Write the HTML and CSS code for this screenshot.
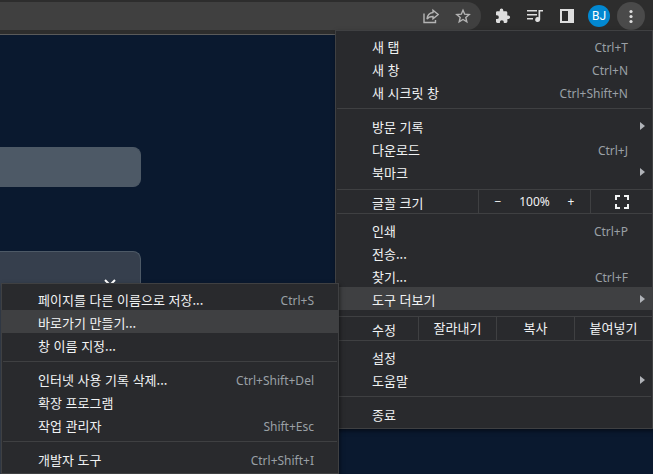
FILE: index.html
```html
<!DOCTYPE html>
<html lang="ko">
<head>
<meta charset="utf-8">
<title>도구 더보기</title>
<link rel="stylesheet" href="styles.css">
</head>
<body>
<header class="toolbar">
  <div class="omnibox">
    <input class="address" type="text" aria-label="주소창">
    <button class="tool" aria-label="공유">
      <svg class="icon dim" viewBox="0 0 16 16"><path d="M1 5.500v9h11.500v-2.500"/><path d="M10 2.200l5.200 4.300-5.200 4.300V8.500c-3 0-4.800.7-6 2.500.3-3.600 2.200-6 6-6.500z"/></svg>
    </button>
    <button class="tool" aria-label="북마크 추가">
      <svg class="icon dim" viewBox="0 0 16 16"><path d="M8 2.200l1.700 4 4.500.4-3.400 2.900 1 4.300L8 11.500l-3.800 2.300 1-4.300-3.400-2.900 4.500-.4z"/></svg>
    </button>
  </div>
  <div class="actions">
    <button class="tool" aria-label="확장 프로그램">
      <svg class="icon solid" viewBox="0 0 16 16"><path d="M13.300 7.500h-1V4.700c0-.8-.6-1.400-1.400-1.400H8.300v-.9a1.800 1.800 0 0 0-3.600 0v.9H2.200C1.500 3.300 1 3.900 1 4.700v2.500h.9a1.900 1.900 0 0 1 0 3.900H1v2.500c0 .8.600 1.400 1.400 1.400h2.500v-.9a1.900 1.900 0 0 1 3.900 0v.9h2.200c.8 0 1.400-.6 1.400-1.400v-2.500h.9a1.800 1.800 0 0 0 0-3.600z"/></svg>
    </button>
    <button class="tool" aria-label="미디어 컨트롤">
      <svg class="icon solid" viewBox="0 0 16 16"><path d="M0 2h10v1.500H0zM0 6h10v1.500H0zM0 10h6v1.500H0zM11.500 2H16v1.600h-2.800v8a2.500 2.500 0 1 1-1.700-2.400z"/></svg>
    </button>
    <button class="tool" aria-label="측면 패널">
      <svg class="icon solid" viewBox="0 0 16 16"><path fill-rule="evenodd" d="M1 1h14v14H1zM3 3v10h6V3z"/></svg>
    </button>
    <button class="tool" aria-label="프로필"><span class="avatar">BJ</span></button>
    <button class="tool" aria-label="메뉴">
      <span class="more"><svg class="icon solid" viewBox="0 0 16 16"><circle cx="8" cy="3.500" r="1.600"/><circle cx="8" cy="8.500" r="1.600"/><circle cx="8" cy="13.500" r="1.600"/></svg></span>
    </button>
  </div>
</header>

<main class="page">
  <input class="field" type="text" aria-label="입력">
  <section class="card">
    <button class="close" aria-label="닫기"><svg viewBox="0 0 12 12"><path d="M1 1l10 10M11 1L1 11"/></svg></button>
  </section>
</main>

<ul class="menu main-menu">
  <li><button class="item">새 탭<kbd>Ctrl+T</kbd></button></li>
  <li><button class="item">새 창<kbd>Ctrl+N</kbd></button></li>
  <li><button class="item">새 시크릿 창<kbd>Ctrl+Shift+N</kbd></button></li>
  <li class="separator"></li>
  <li><button class="item parent">방문 기록</button></li>
  <li><button class="item">다운로드<kbd>Ctrl+J</kbd></button></li>
  <li><button class="item parent">북마크</button></li>
  <li class="controls">
    <span class="label">글꼴 크기</span>
    <div class="zoom">
      <button aria-label="축소">−</button>
      <span>100%</span>
      <button aria-label="확대">+</button>
    </div>
    <button class="fullscreen" aria-label="전체화면"><svg viewBox="0 0 14 14"><path d="M1 5V1h4M9 1h4v4M13 9v4H9M5 13H1V9"/></svg></button>
  </li>
  <li><button class="item">인쇄<kbd>Ctrl+P</kbd></button></li>
  <li><button class="item">전송...</button></li>
  <li><button class="item">찾기...<kbd>Ctrl+F</kbd></button></li>
  <li class="has-submenu">
    <button class="item parent active">도구 더보기</button>
    <ul class="menu submenu">
      <li><button class="item">페이지를 다른 이름으로 저장...<kbd>Ctrl+S</kbd></button></li>
      <li><button class="item active">바로가기 만들기...</button></li>
      <li><button class="item">창 이름 지정...</button></li>
      <li class="separator"></li>
      <li><button class="item">인터넷 사용 기록 삭제...<kbd>Ctrl+Shift+Del</kbd></button></li>
      <li><button class="item">확장 프로그램</button></li>
      <li><button class="item">작업 관리자<kbd>Shift+Esc</kbd></button></li>
      <li class="separator"></li>
      <li><button class="item">개발자 도구<kbd>Ctrl+Shift+I</kbd></button></li>
    </ul>
  </li>
  <li class="controls">
    <span class="label">수정</span>
    <button class="edit">잘라내기</button>
    <button class="edit">복사</button>
    <button class="edit">붙여넣기</button>
  </li>
  <li><button class="item">설정</button></li>
  <li><button class="item parent">도움말</button></li>
  <li class="separator"></li>
  <li><button class="item">종료</button></li>
</ul>
</body>
</html>
```
FILE: styles.css
```css
* {
  box-sizing: border-box;
}

body {
  margin: 0;
  min-height: 100vh;
  display: flex;
  flex-direction: column;
  position: relative;
  overflow: hidden;
  background: #0a192f;
  color: #f1f3f4;
  font: 13px/20px "Noto Sans CJK KR", sans-serif;
}

button,
input {
  margin: 0;
  padding: 0;
  border: 0;
  background: none;
  color: inherit;
  font: inherit;
}

/* Browser toolbar */
.toolbar {
  display: flex;
  gap: 6px;
  padding: 2px 6px 4px 0;
  background: #2d2d2d;
  border-bottom: 1px solid #5a5a5a;
}

.omnibox {
  flex: 1;
  display: flex;
  padding-right: 2px;
  background: #404040;
  border-radius: 0 14px 14px 0;
}

.address {
  flex: 1;
  min-width: 0;
}

.actions {
  display: flex;
}

.tool {
  display: flex;
  align-items: center;
  justify-content: center;
  width: 32px;
  height: 28px;
}

.icon {
  width: 16px;
  height: 16px;
}

.dim {
  fill: none;
  stroke: #b4b4b4;
  stroke-width: 1.4;
}

.solid {
  fill: #dedede;
}

.avatar {
  width: 22px;
  height: 22px;
  border-radius: 50%;
  background: #0288d1;
  color: #fff;
  font: 12px/22px Roboto, sans-serif;
}

.more {
  display: flex;
  align-items: center;
  justify-content: center;
  width: 28px;
  height: 28px;
  border-radius: 50%;
  background: #4a4a4a;
}

/* Page behind the menus */
.page {
  flex: 1;
  display: flex;
  flex-direction: column;
  align-items: flex-start;
  gap: 64px;
  padding-top: 112px;
}

.field,
.card {
  width: 141px;
  border: 1px solid #4d5966;
  border-left: 0;
  border-radius: 0 8px 8px 0;
}

.field {
  height: 40px;
  background: #4d5966;
}

.card {
  flex: 1;
  display: flex;
  justify-content: flex-end;
  align-items: flex-start;
  padding: 27px 24px 0 0;
  border-bottom: 0;
  border-radius: 0 8px 0 0;
  background: #363f4d;
}

.close svg {
  display: block;
  width: 12px;
  height: 12px;
  fill: none;
  stroke: #fff;
  stroke-width: 2;
}

/* Menus */
.menu {
  position: absolute;
  margin: 0;
  padding: 3px 0;
  list-style: none;
  background: #292a2d;
  border: 1px solid #3f4042;
  box-shadow: 1px 2px 4px rgba(0, 0, 0, 0.5);
}

.main-menu {
  top: 30px;
  right: 0;
  width: 318px;
}

.has-submenu {
  position: relative;
}

.submenu {
  top: -4px;
  right: calc(100% - 3px);
  width: 338px;
}

.item {
  display: flex;
  align-items: center;
  width: 100%;
  height: 23px;
  padding: 2px 24px 0 36px;
  text-align: left;
  position: relative;
}

.active {
  background: #3f4042;
}

.item kbd {
  margin-left: auto;
  padding-top: 2px;
  color: #9aa0a6;
  font: 12px/20px "Noto Sans", sans-serif;
}

.parent::after {
  content: "";
  position: absolute;
  right: 7px;
  top: 8px;
  border: 4px solid transparent;
  border-left: 5px solid #b0b3b8;
  border-right: 0;
}

.separator {
  height: 1px;
  margin: 5px 1px;
  background: #3f4042;
}

.controls {
  display: flex;
  height: 25px;
  margin: 6px 0 4px 1px;
  border: 1px solid #3f4042;
  border-width: 1px 0;
}

.label {
  flex: 1;
  padding: 3px 0 0 35px;
}

.zoom,
.fullscreen,
.edit {
  border-left: 1px solid #3f4042;
}

.zoom {
  display: flex;
  align-items: center;
  width: 112px;
  font: 12px/20px "Noto Sans", sans-serif;
}

.zoom button {
  width: 38px;
}

.zoom span {
  flex: 1;
  text-align: center;
}

.fullscreen {
  display: flex;
  align-items: center;
  justify-content: center;
  width: 62px;
}

.fullscreen svg {
  width: 14px;
  height: 14px;
  fill: none;
  stroke: #f1f3f4;
  stroke-width: 2;
}

.edit {
  width: 78px;
  padding-bottom: 1px;
}
```
